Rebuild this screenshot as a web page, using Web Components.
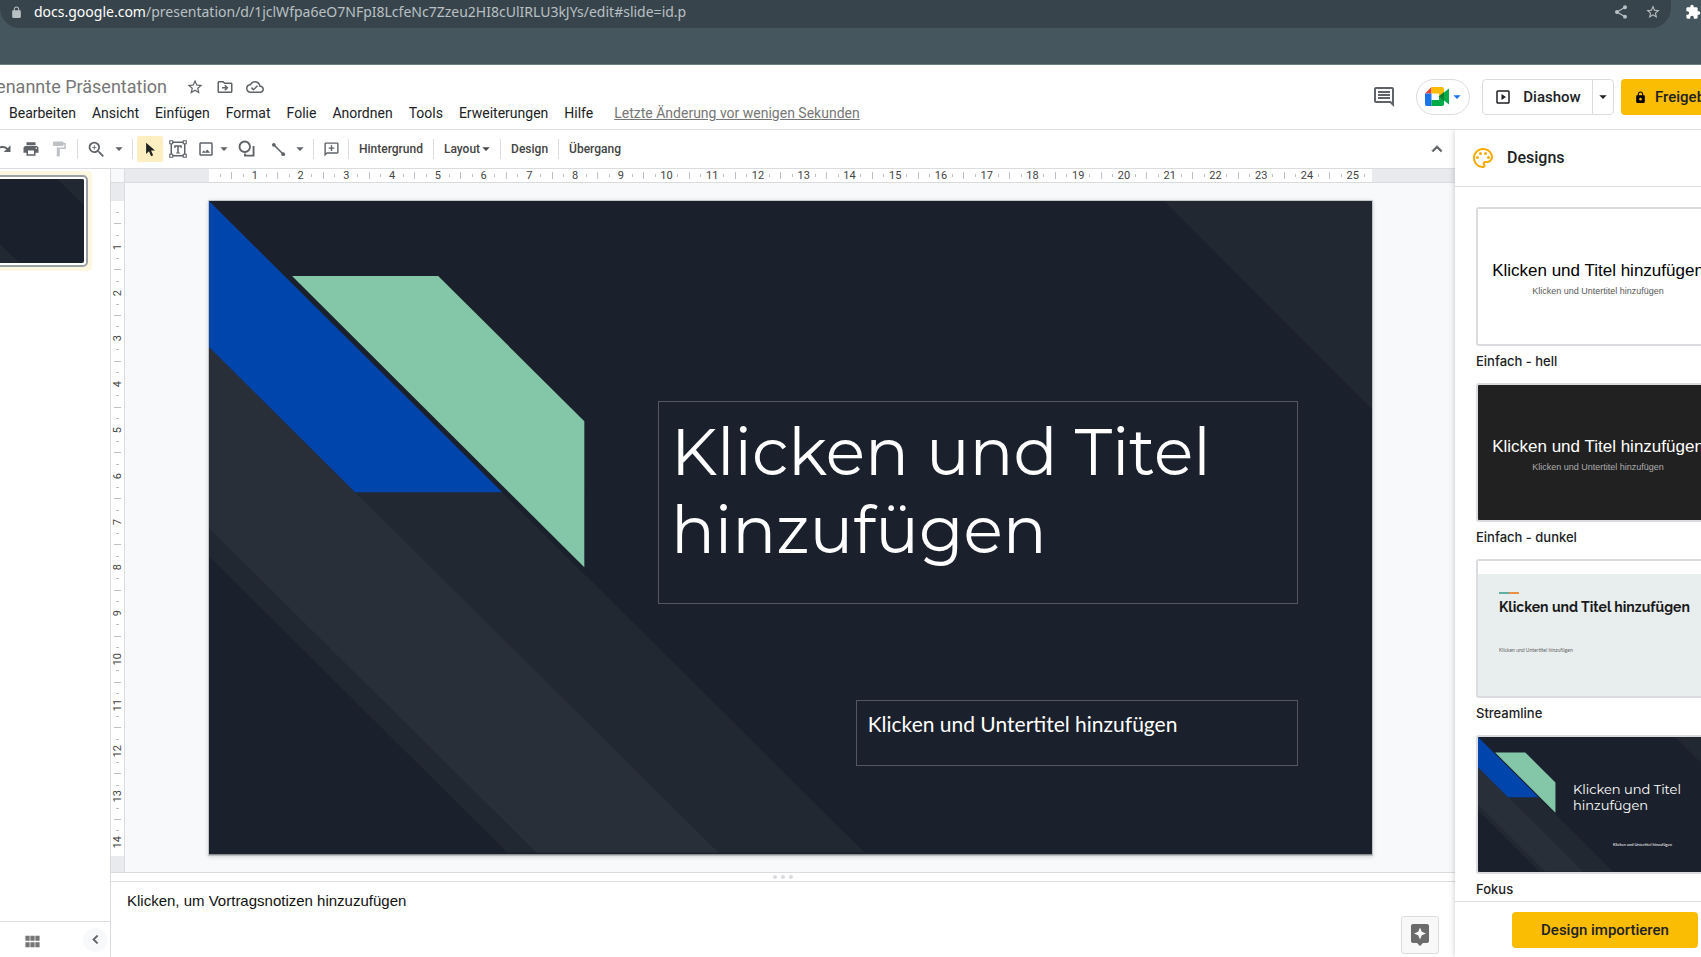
<!DOCTYPE html>
<html lang="de">
<head>
<meta charset="utf-8">
<title>Unbenannte Präsentation</title>
<style>
  html, body { height: 100%; margin: 0; }
  body { overflow: hidden; background: #fff; color: #202124; font: 14px/20px Roboto, "Noto Sans", sans-serif; }
</style>
</head>
<body>
<slides-app></slides-app>
<script>
const define = (name, html, setup) => {
  const template = document.createElement('template');
  template.innerHTML = html;
  customElements.define(name, class extends HTMLElement {
    constructor() {
      super();
      this.attachShadow({ mode: 'open' }).append(template.content.cloneNode(true));
    }
    connectedCallback() { if (setup) setup(this, this.shadowRoot); }
  });
};

const BUTTON = `button { font: inherit; color: inherit; background: none; border: 0; margin: 0; padding: 0; display: flex; align-items: center; justify-content: center; box-sizing: border-box; white-space: nowrap; }`;

/* ---------- icons, all on a 24 unit grid ---------- */
const ICONS = {
  lock: '<path d="M18 8h-1V6c0-2.76-2.24-5-5-5S7 3.24 7 6v2H6c-1.1 0-2 .9-2 2v10c0 1.100.9 2 2 2h12c1.100 0 2-.9 2-2V10c0-1.100-.9-2-2-2zM8.900 8V6c0-1.710 1.390-3.100 3.100-3.100s3.100 1.390 3.100 3.100v2z"/>',
  lockhole: '<path fill-rule="evenodd" d="M18 8h-1V6c0-2.760-2.240-5-5-5S7 3.240 7 6v2H6c-1.100 0-2 .9-2 2v10c0 1.100.9 2 2 2h12c1.100 0 2-.9 2-2V10c0-1.100-.9-2-2-2zM12 17.500a2.500 2.500 0 1 1 0-5 2.500 2.500 0 0 1 0 5zM8.900 8V6c0-1.710 1.390-3.100 3.100-3.100s3.100 1.390 3.100 3.100v2z"/>',
  share: '<path d="M18 16.080c-.76 0-1.440.3-1.960.77L8.910 12.700c.05-.23.09-.46.09-.7s-.04-.47-.09-.7l7.050-4.110c.54.5 1.250.81 2.040.81 1.660 0 3-1.340 3-3s-1.340-3-3-3-3 1.340-3 3c0 .24.04.47.09.7L8.040 9.810C7.500 9.310 6.790 9 6 9c-1.660 0-3 1.340-3 3s1.340 3 3 3c.79 0 1.500-.31 2.040-.81l7.120 4.160c-.05.21-.08.43-.08.65 0 1.610 1.310 2.920 2.920 2.920s2.920-1.310 2.920-2.920-1.310-2.920-2.920-2.920z"/>',
  star: '<path d="M22 9.240l-7.190-.62L12 2 9.190 8.630 2 9.240l5.460 4.730L5.820 21 12 17.270 18.180 21l-1.630-7.030L22 9.240zM12 15.400l-3.760 2.270 1-4.280-3.320-2.880 4.380-.38L12 6.100l1.710 4.040 4.380.38-3.320 2.880 1 4.280L12 15.400z"/>',
  puzzle: '<path d="M20.500 11H19V7c0-1.100-.9-2-2-2h-4V3.500a2.500 2.500 0 0 0-5 0V5H4c-1.100 0-1.990.9-1.990 2v3.800H3.500c1.490 0 2.700 1.210 2.700 2.700s-1.210 2.700-2.700 2.700H2V20c0 1.100.9 2 2 2h3.800v-1.500c0-1.490 1.210-2.700 2.700-2.700s2.700 1.210 2.700 2.700V22H17c1.100 0 2-.9 2-2v-4h1.500a2.500 2.500 0 0 0 0-5z"/>',
  move: '<path d="M20 6h-8l-2-2H4c-1.100 0-2 .9-2 2v12c0 1.100.9 2 2 2h16c1.100 0 2-.9 2-2V8c0-1.100-.9-2-2-2zm0 12H4V6h5.170l2 2H20v10zm-7.500-1l4-4-4-4-1.400 1.400L12.700 12H8v2h4.700l-1.600 1.600z"/>',
  cloud: '<path d="M19.350 10.040A7.490 7.490 0 0 0 12 4C9.110 4 6.600 5.640 5.350 8.040A5.994 5.994 0 0 0 0 14c0 3.310 2.690 6 6 6h13c2.760 0 5-2.240 5-5 0-2.640-2.050-4.780-4.650-4.960zM19 18H6c-2.210 0-4-1.790-4-4 0-2.050 1.530-3.760 3.560-3.970l1.070-.11.5-.95A5.469 5.469 0 0 1 12 6c2.620 0 4.880 1.860 5.390 4.430l.3 1.500 1.530.11A2.980 2.980 0 0 1 22 15c0 1.650-1.350 3-3 3zm-9-3.820l-2.090-2.090L6.500 13.500 10 17l6.010-6.010-1.410-1.410z"/>',
  comments: '<path d="M21.990 4c0-1.100-.89-2-1.990-2H4c-1.100 0-2 .9-2 2v12c0 1.100.9 2 2 2h14l4 4-.01-18zM20 4v13.170L18.830 16H4V4h16zM6 12h12v2H6zm0-3h12v2H6zm0-3h12v2H6z"/>',
  meet: '<path fill="#ea4335" d="M0 8.500 6.500 2v6.500z"/><path fill="#fbbc04" d="M6.500 2H17c1 0 2 .8 2 2v5l-5 4V8.500H6.500z"/><path fill="#1a73e8" d="M0 8.500h6.500V15H0z"/><path fill="#1a73e8" d="M0 15h6.500v6H2c-1.200 0-2-.8-2-2z"/><path fill="#00ac47" d="M6.500 15H14v-3l5 3.500V19c0 1.200-.8 2-2 2H6.500z"/><path fill="#00ac47" d="m19 7.500 5-4v16l-5-4z"/><path fill="#00832d" d="m13.500 11.600 5.500-4.600v9z"/>',
  present: '<path d="M10 8v8l6-4zM19 3H5a2 2 0 0 0-2 2v14c0 1.100.9 2 2 2h14c1.100 0 2-.9 2-2V5a2 2 0 0 0-2-2zm0 16H5V5h14z"/>',
  caret: '<path d="M1 7h22L12 18z"/>',
  redo: '<path d="M18.400 10.600C16.550 8.990 14.150 8 11.500 8c-4.650 0-8.580 3.030-9.960 7.220L3.900 16a8.002 8.002 0 0 1 7.600-5.500c1.950 0 3.730.72 5.120 1.880L13 16h9V7z"/>',
  print: '<path d="M19 8H5c-1.660 0-3 1.340-3 3v6h4v4h12v-4h4v-6c0-1.660-1.340-3-3-3zm-3 11H8v-5h8v5zm3-7c-.55 0-1-.45-1-1s.45-1 1-1 1 .45 1 1-.45 1-1 1zm-1-9H6v4h12V3z"/>',
  paint: '<path d="M18 4V3c0-.55-.45-1-1-1H5c-.55 0-1 .45-1 1v4c0 .55.45 1 1 1h12c.55 0 1-.45 1-1V6h1v4H9v11c0 .55.45 1 1 1h2c.55 0 1-.45 1-1v-9h8V4z"/>',
  zoom: '<path d="M15.500 14h-.79l-.28-.27A6.471 6.471 0 0 0 16 9.500 6.500 6.500 0 1 0 9.500 16c1.610 0 3.090-.59 4.230-1.570l.27.28v.79l5 4.990L20.490 19zm-6 0C7.010 14 5 11.990 5 9.500S7.010 5 9.500 5 14 7.010 14 9.500 11.990 14 9.500 14zM12 10h-2v2H9v-2H7V9h2V7h1v2h2z"/>',
  cursor: '<path d="M5 1v18l4.600-4.300 3.300 8 3.300-1.400-3.300-7.700h6.300z"/>',
  textbox: '<path fill="none" stroke="currentColor" stroke-width="2" d="M5 3h14M5 21h14M3 5v14M21 5v14"/><path fill="#fff" stroke="currentColor" stroke-width="1.500" d="M1 1h4v4H1zM19 1h4v4h-4zM1 19h4v4H1zM19 19h4v4h-4z"/><path d="M7 7h10v3.500h-1.500L15 9h-2v7.500h1.500V18h-5v-1.500H11V9H9l-.5 1.500H7z"/>',
  image: '<path d="M19 5v14H5V5h14m0-2H5c-1.100 0-2 .9-2 2v14c0 1.100.9 2 2 2h14c1.100 0 2-.9 2-2V5c0-1.100-.9-2-2-2zm-5.500 9.500-2.700 3.400-1.900-2.200L6.500 17h11z"/>',
  shapes: '<circle cx="9" cy="9" r="7" fill="none" stroke="currentColor" stroke-width="2.500"/><path d="M19.500 8H22v14H8v-4h2.500v1.500h9z"/>',
  line: '<path fill="none" stroke="currentColor" stroke-width="2.600" d="M4 4l16 16"/><circle cx="4.500" cy="4.500" r="3"/><circle cx="19.500" cy="19.500" r="3"/>',
  addcomment: '<path d="M20 2H4c-1.100 0-2 .9-2 2v18l4-4h14c1.100 0 2-.9 2-2V4c0-1.100-.9-2-2-2zm0 14H5.200L4 17.200V4h16zM11 14h2v-3h3V9h-3V6h-2v3H8v2h3z"/>',
  up: '<path d="M12 8l-6 6 1.410 1.410L12 10.830l4.590 4.580L18 14z" stroke="currentColor"/>',
  left: '<path d="M15.410 7.410 14 6l-6 6 6 6 1.410-1.410L10.830 12z" stroke="currentColor"/>',
  palette: '<path d="M12 22C6.490 22 2 17.510 2 12S6.490 2 12 2s10 4.040 10 9c0 3.310-2.690 6-6 6h-1.770c-.28 0-.5.22-.5.5 0 .12.050.23.130.33.410.47.640 1.060.640 1.670A2.500 2.500 0 0 1 12 22zm0-18c-4.410 0-8 3.590-8 8s3.590 8 8 8c.28 0 .5-.22.5-.5a.54.54 0 0 0-.14-.35c-.41-.46-.63-1.050-.63-1.650a2.500 2.500 0 0 1 2.500-2.500H16c2.210 0 4-1.790 4-4 0-3.860-3.590-7-8-7z"/><circle cx="6.500" cy="11.500" r="1.500"/><circle cx="9.500" cy="7.500" r="1.500"/><circle cx="14.500" cy="7.500" r="1.500"/><circle cx="17.500" cy="11.500" r="1.500"/>',
  grid: '<path d="M2 4h6v7H2zM9 4h6v7H9zM16 4h6v7h-6zM2 13h6v7H2zM9 13h6v7H9zM16 13h6v7h-6z"/>',
  explore: '<path d="M19 1H5c-1.100 0-2 .9-2 2v15c0 1.100.9 2 2 2h4l3 3 3-3h4c1.100 0 2-.9 2-2V3c0-1.100-.9-2-2-2zm-5.200 11.300L12 16.500l-1.800-4.200L6 10.500l4.200-1.800L12 4.500l1.800 4.200 4.200 1.800z"/>'
};
define('ui-icon', `
<style>:host { display: block; flex: none; width: var(--size, 18px); height: var(--size, 18px); } svg { display: block; width: 100%; height: 100%; fill: currentColor; overflow: visible; }</style>
<svg viewBox="0 0 24 24" aria-hidden="true"></svg>`, (el, root) => {
  root.querySelector('svg').innerHTML = ICONS[el.getAttribute('name')];
});

/* ---------- browser bar ---------- */
define('browser-bar', `
<style>
  :host { display: flex; align-items: flex-start; height: 64px; background: #45565f; border-bottom: 1px solid #6b7c85; color: #b9c0c4; font: 14px/22px "Noto Sans", sans-serif; }
  ${BUTTON}
  .address { flex: 1; min-width: 0; display: flex; align-items: center; gap: 11px; height: 28px; box-sizing: border-box; padding: 0 10px 4px; background: #38444b; border-radius: 0 0 20px 20px; }
  .url { flex: 1; min-width: 0; white-space: nowrap; overflow: hidden; }
  b { font-weight: 400; color: #fff; }
  .address ui-icon { --size: 13px; }
  .address button ui-icon { --size: 16px; }
  .actions { display: flex; gap: 16px; }
  .ext { width: 30px; height: 24px; color: #fff; justify-content: flex-end; }
  .ext ui-icon { --size: 16px; }
</style>
<div class="address"><ui-icon name="lock"></ui-icon><div class="url"><b>docs.google.com</b>/presentation/d/1jclWfpa6eO7NFpI8LcfeNc7Zzeu2HI8cUlIRLU3kJYs/edit#slide=id.p</div>
<div class="actions"><button aria-label="Teilen"><ui-icon name="share"></ui-icon></button><button aria-label="Lesezeichen"><ui-icon name="star"></ui-icon></button></div></div>
<button class="ext" aria-label="Erweiterungen"><ui-icon name="puzzle"></ui-icon></button>`);

/* ---------- document header ---------- */
define('doc-header', `
<style>
  :host { display: flex; height: 64px; border-bottom: 1px solid #dadce0; overflow: hidden; }
  ${BUTTON}
  .doc { flex: 1; min-width: 0; padding-top: 10px; }
  .name { display: flex; align-items: center; gap: 12px; height: 24px; color: #5f6368; }
  h1 { margin: 0 7px 0 0; width: 167px; display: flex; justify-content: flex-end; overflow: hidden; font: 400 18px/24px Roboto, sans-serif; color: #777; white-space: nowrap; }
  nav { display: flex; align-items: center; height: 28px; padding-left: 1px; }
  nav button { padding: 0 8px; color: #202124; }
  nav a { margin-left: 13px; color: #777; text-decoration: underline; white-space: nowrap; }
  .actions { display: flex; align-items: flex-start; padding-top: 14px; font: 500 15px/20px Roboto, sans-serif; }
  .actions button { height: 36px; }
  .comments { width: 42px; color: #5f6368; }
  .comments ui-icon { --size: 24px; }
  .meet { width: 54px; gap: 4px; margin: 0 12px 0 11px; border: 1px solid #dadce0; border-radius: 18px; color: #1a73e8; }
  .meet ui-icon { --size: 24px; }
  .meet ui-icon + ui-icon, .more ui-icon { --size: 8px; }
  .split { display: flex; border: 1px solid #dadce0; border-radius: 4px; margin-right: 7px; }
  .split button { height: 34px; }
  .show { width: 109px; gap: 11px; }
  .more { width: 21px; border-left: 1px solid #dadce0; }
  .release { width: 80px; padding-left: 13px; justify-content: flex-start; gap: 8px; background: #fbbc04; border-radius: 4px 0 0 4px; overflow: hidden; }
  .release ui-icon { --size: 13px; color: #000; }
</style>
<div class="doc">
  <div class="name"><h1>Unbenannte Präsentation</h1>
    <button aria-label="Markieren"><ui-icon name="star"></ui-icon></button>
    <button aria-label="Verschieben"><ui-icon name="move"></ui-icon></button>
    <button aria-label="Status"><ui-icon name="cloud"></ui-icon></button></div>
  <nav><button>Bearbeiten</button><button>Ansicht</button><button>Einfügen</button><button>Format</button><button>Folie</button><button>Anordnen</button><button>Tools</button><button>Erweiterungen</button><button>Hilfe</button><a href="#verlauf">Letzte Änderung vor wenigen Sekunden</a></nav>
</div>
<div class="actions">
  <button class="comments" aria-label="Kommentare"><ui-icon name="comments"></ui-icon></button>
  <button class="meet" aria-label="Meet"><ui-icon name="meet"></ui-icon><ui-icon name="caret"></ui-icon></button>
  <div class="split"><button class="show"><ui-icon name="present"></ui-icon>Diashow</button><button class="more" aria-label="Weitere Optionen"><ui-icon name="caret"></ui-icon></button></div>
  <button class="release"><ui-icon name="lockhole"></ui-icon>Freigeben</button>
</div>`);

/* ---------- toolbar ---------- */
define('tool-bar', `
<style>
  :host { display: flex; align-items: center; height: 38px; border-bottom: 1px solid #dadce0; color: #5f6368; font: 500 12px/16px Roboto, sans-serif; }
  ${BUTTON}
  button { height: 26px; width: 28px; flex: none; }
  hr { border: 0; width: 1px; height: 20px; margin: 0 4px; background: #dadce0; flex: none; }
  .text { width: auto; padding: 0 6px; color: #444; gap: 2px; }
  .caret { width: 18px; } .caret ui-icon, .text ui-icon { --size: 8px; }
  .redo { width: 17px; justify-content: flex-end; padding-right: 5px; }
  .paint { color: #bdc1c6; }
  .select { width: 26px; background: #feefc3; border-radius: 2px; color: #202124; }
  .box { width: 30px; } .mid { width: 26px; } .shapes { width: 36px; } .narrow { width: 10px; }
  .zoom ui-icon { --size: 21px; }
  .fill { flex: 1; }
  .hide { width: 36px; } .hide ui-icon { --size: 20px; }
</style>
<button class="redo" aria-label="Wiederholen"><ui-icon name="redo"></ui-icon></button>
<button aria-label="Drucken"><ui-icon name="print"></ui-icon></button>
<button class="paint" aria-label="Format übertragen"><ui-icon name="paint"></ui-icon></button><hr>
<button class="zoom" aria-label="Zoom"><ui-icon name="zoom"></ui-icon></button><button class="caret" aria-label="Zoomstufen"><ui-icon name="caret"></ui-icon></button><hr>
<button class="select" aria-label="Auswählen"><ui-icon name="cursor" style="--size:15px"></ui-icon></button>
<button class="box" aria-label="Textfeld"><ui-icon name="textbox"></ui-icon></button>
<button class="mid" aria-label="Bild einfügen"><ui-icon name="image"></ui-icon></button><button class="narrow caret" aria-label="Bildquellen"><ui-icon name="caret"></ui-icon></button>
<button class="shapes" aria-label="Form"><ui-icon name="shapes"></ui-icon></button>
<button class="mid" aria-label="Linie"><ui-icon name="line" style="--size:15px"></ui-icon></button><button class="caret" aria-label="Linienarten"><ui-icon name="caret"></ui-icon></button><hr>
<button class="mid" aria-label="Kommentar hinzufügen"><ui-icon name="addcomment" style="--size:17px"></ui-icon></button><hr>
<button class="text">Hintergrund</button><hr><button class="text">Layout<ui-icon name="caret"></ui-icon></button><hr><button class="text">Design</button><hr><button class="text">Übergang</button>
<span class="fill"></span><button class="hide" aria-label="Menüs ausblenden"><ui-icon name="up"></ui-icon></button>`);

/* ---------- ruler: one slot per quarter centimetre ---------- */
define('slide-ruler', `
<style>
  :host { display: flex; background: #e8eaed; font: 11px/12px Roboto, sans-serif; color: #444; box-sizing: border-box; }
  :host([axis=x]) { padding: 0 83px 0 84px; border-bottom: 1px solid #dadce0; }
  :host([axis=y]) { padding: 18px 0 16px; border-right: 1px solid #dadce0; flex-direction: column; }
  .track { flex: 1; min-width: 0; min-height: 0; display: flex; background: #fff; overflow: hidden; }
  :host([axis=y]) .track { flex-direction: column; }
  .track > * { flex: 0 0 calc(100% / var(--slots)); display: flex; align-items: center; justify-content: center; min-width: 0; min-height: 0; }
  .track > .lead { flex-basis: calc(50% / var(--slots)); }
  i { background: #bdc1c6; width: 1px; height: 3px; flex: none; }
  .half i { height: 7px; }
  :host([axis=y]) i { width: 3px; height: 1px; }
  :host([axis=y]) .half i { width: 7px; }
  :host([axis=y]) span { writing-mode: vertical-rl; transform: rotate(180deg); white-space: nowrap; }
</style>
<div class="track"></div>`, (el, root) => {
  const cm = parseFloat(el.getAttribute('cm'));
  const track = root.querySelector('.track');
  track.style.setProperty('--slots', cm * 4);
  let html = '<div class="lead"></div>';
  for (let q = 1; q < cm * 4 - 0.5; q++) {
    html += q % 4 === 0 ? `<div><span>${q / 4}</span></div>` : `<div class="${q % 2 ? 'quarter' : 'half'}"><i></i></div>`;
  }
  track.innerHTML = html;
});

/* ---------- Fokus theme artwork ---------- */
define('slide-art', `
<style>:host { display: block; } svg { display: block; width: 100%; height: 100%; }</style>
<svg viewBox="0 0 1162 653" preserveAspectRatio="none" aria-hidden="true">
  <path fill="#1b212c" d="M0 0h1162v653H0z"/>
  <path fill="#222832" d="M0 0 655 651H298L0 355zM954 0h208v208z"/>
  <path fill="#282f38" d="M0 146 509 651H327L0 327z"/>
  <path fill="#1b212c" d="M0 0 293 291l83 83 4-4L4 -4z"/>
  <path fill="#0045ac" d="M0 0 293 291H146L0 146z"/>
  <path fill="#83c7a8" d="M83 75h146l146 145v146z"/>
</svg>`);

/* ---------- slide canvas ---------- */
define('slide-canvas', `
<style>
  :host { display: block; background: #f8f9fa; padding: 18px 83px 17px 84px; }
  .slide { position: relative; aspect-ratio: 1162 / 653; box-shadow: 0 0 0 1px rgba(60,64,67,.2), 0 1px 4px 1px rgba(60,64,67,.2); color: #fff; }
  slide-art { height: 100%; }
  .box { position: absolute; right: 6.4%; box-sizing: border-box; border: 1px solid #53575f; margin: 0; font-weight: 400; }
  h2 { left: 38.6%; top: 30.6%; height: 31%; padding: 11px 12px; font: 65px/78px Montserrat, Inter, sans-serif; }
  p { left: 55.6%; top: 76.4%; height: 10%; padding: 10px 11px; font: 21px/25px Lato, sans-serif; }
</style>
<div class="slide"><slide-art></slide-art><h2 class="box">Klicken und Titel hinzufügen</h2><p class="box">Klicken und Untertitel hinzufügen</p></div>`);

/* ---------- filmstrip ---------- */
define('film-strip', `
<style>
  :host { display: flex; flex-direction: column; border-right: 1px solid #dadce0; overflow: hidden; min-height: 0; }
  ${BUTTON}
  .list { flex: 1; padding: 2px 18px 0 0; display: flex; align-items: flex-start; justify-content: flex-end; }
  .item { background: #fef7e0; padding: 4px; border-radius: 4px; flex: none; }
  .thumb { padding: 2px; background: #fff; border: 2px solid #9aa0a6; border-radius: 5px; }
  slide-art { width: 149px; height: 84px; border-radius: 2px; overflow: hidden; }
  footer { height: 35px; box-sizing: content-box; border-top: 1px solid #dadce0; display: flex; align-items: center; justify-content: space-between; padding: 0 3px 0 24px; color: #757575; }
  footer ui-icon { --size: 17px; }
  footer button { height: 31px; align-items: flex-end; padding-bottom: 5px; }
  footer .collapse { width: 24px; height: 24px; padding: 0; align-items: center; border-radius: 12px; background: #f8f9fa; color: #5f6368; }
</style>
<div class="list"><div class="item"><div class="thumb"><slide-art></slide-art></div></div></div>
<footer><button aria-label="Rasteransicht"><ui-icon name="grid"></ui-icon></button><button class="collapse" aria-label="Filmstreifen ausblenden"><ui-icon name="left"></ui-icon></button></footer>`);

/* ---------- speaker notes ---------- */
define('speaker-notes', `
<style>
  :host { display: flex; flex-direction: column; min-height: 0; background: #fff; border-top: 1px solid #dadce0; }
  ${BUTTON}
  .grip { height: 8px; border-bottom: 1px solid #dadce0; display: flex; align-items: center; justify-content: center; gap: 4px; }
  .grip i { width: 4px; height: 4px; border-radius: 2px; background: #dadce0; }
  .body { flex: 1; display: flex; justify-content: space-between; align-items: flex-end; padding: 0 16px 3px; }
  p { margin: 0; align-self: flex-start; padding-top: 9px; font: 15px/20px "Liberation Sans", Arial, sans-serif; color: #111; }
  button { width: 38px; height: 38px; background: #f8f8f8; border: 1px solid #dadce0; border-radius: 3px; color: #6b6b6b; }
  button ui-icon { --size: 24px; }
</style>
<div class="grip"><i></i><i></i><i></i></div>
<div class="body"><p>Klicken, um Vortragsnotizen hinzuzufügen</p><button aria-label="Erkunden"><ui-icon name="explore"></ui-icon></button></div>`);

/* ---------- theme card and panel ---------- */
define('theme-card', `
<style>
  :host { display: block; width: 244px; }
  .preview { border: 2px solid #dadce0; border-radius: 3px; height: 135px; overflow: hidden; }
  .label { margin-top: 5px; font: 500 13px/20px Inter, Roboto, sans-serif; color: #202124; }
</style>
<div class="preview"><slot></slot></div><div class="label"><slot name="label"></slot></div>`);

define('theme-panel', `
<style>
  :host { display: flex; flex-direction: column; min-height: 0; background: #fff; overflow: hidden; }
  ${BUTTON}
  header, .themes, footer { width: 300px; box-sizing: border-box; flex: none; }
  header { height: 57px; border-bottom: 1px solid #dadce0; display: flex; align-items: center; gap: 12px; padding: 0 16px 1px; }
  header ui-icon { --size: 24px; color: #f9ab00; }
  h2 { margin: 0; font: 500 16px/24px Roboto, sans-serif; }
  .themes { flex: 1; min-height: 0; overflow: hidden; padding: 20px 21px 0; display: flex; flex-direction: column; gap: 12px; }
  footer { height: 56px; border-top: 1px solid #dadce0; display: flex; align-items: center; justify-content: center; }
  footer button { width: 186px; height: 36px; background: #fbbc04; border-radius: 4px; font: 500 15px/20px Roboto, sans-serif; }
  .plain { height: 100%; box-sizing: border-box; padding-top: 52px; text-align: center; font: 17px/20px "Liberation Sans", Arial, sans-serif; color: #000; background: #fff; white-space: nowrap; }
  .plain small { display: block; margin-top: 4px; font-size: 9px; line-height: 12px; color: #595959; }
  .dark { background: #212121; color: #fff; } .dark small { color: #adadad; }
  .stream { height: 100%; box-sizing: border-box; border-top: 13px solid #fff; background: #e8eded; padding: 18px 21px 0; color: #1a1a1a; font: 700 14px/20px Raleway, Montserrat, sans-serif; white-space: nowrap; }
  .stream::before { content: ""; display: block; width: 20px; height: 2px; background: linear-gradient(90deg, #5fb0a2 50%, #eb8f48 50%); margin-bottom: 3px; }
  .stream small { display: block; margin-top: 29px; font: 5px/8px Lato, sans-serif; color: #666; }
  .fokus { height: 100%; display: grid; color: #fff; font: 13px/16px Montserrat, Inter, sans-serif; }
  .fokus > * { grid-area: 1 / 1; min-height: 0; }
  .fokus div { position: relative; padding: 44px 22px 0 95px; }
  .fokus small { display: block; margin-top: 28px; padding-left: 40px; font: 4px/8px Lato, sans-serif; white-space: nowrap; }
</style>
<header><ui-icon name="palette"></ui-icon><h2>Designs</h2></header>
<div class="themes">
  <theme-card><div class="plain">Klicken und Titel hinzufügen<small>Klicken und Untertitel hinzufügen</small></div><span slot="label">Einfach - hell</span></theme-card>
  <theme-card><div class="plain dark">Klicken und Titel hinzufügen<small>Klicken und Untertitel hinzufügen</small></div><span slot="label">Einfach - dunkel</span></theme-card>
  <theme-card><div class="stream">Klicken und Titel hinzufügen<small>Klicken und Untertitel hinzufügen</small></div><span slot="label">Streamline</span></theme-card>
  <theme-card><div class="fokus"><slide-art></slide-art><div>Klicken und Titel<br>hinzufügen<small>Klicken und Untertitel hinzufügen</small></div></div><span slot="label">Fokus</span></theme-card>
</div>
<footer><button>Design importieren</button></footer>`);

/* ---------- application shell ---------- */
define('slides-app', `
<style>
  :host { display: flex; flex-direction: column; height: 100vh; }
  .work { flex: 1; min-height: 0; display: grid; grid-template-columns: minmax(0, 1fr) 246px; }
  .main { display: flex; flex-direction: column; min-height: 0; min-width: 0; }
  .edit { flex: 1; min-height: 0; display: grid; grid-template-columns: 111px minmax(0, 1fr); }
  .stage { display: grid; grid-template-columns: 14px minmax(0, 1fr); grid-template-rows: 14px auto minmax(0, 1fr); min-height: 0; }
  .corner { background: #f8f9fa; border: solid #dadce0; border-width: 0 1px 1px 0; }
  speaker-notes { grid-column: 1 / 3; }
  theme-panel { box-shadow: 0 0 6px rgba(60,64,67,.28); clip-path: inset(0 0 0 -8px); }
</style>
<browser-bar></browser-bar>
<doc-header></doc-header>
<div class="work">
  <div class="main">
    <tool-bar></tool-bar>
    <div class="edit">
      <film-strip></film-strip>
      <div class="stage">
        <div class="corner"></div><slide-ruler axis="x" cm="25.4"></slide-ruler>
        <slide-ruler axis="y" cm="14.28"></slide-ruler><slide-canvas></slide-canvas>
        <speaker-notes></speaker-notes>
      </div>
    </div>
  </div>
  <theme-panel></theme-panel>
</div>`);
</script>
</body>
</html>
